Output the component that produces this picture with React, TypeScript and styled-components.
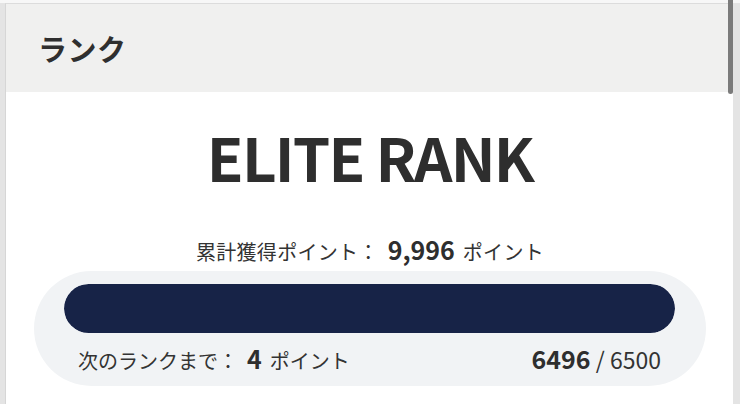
import React from "react";
import styled, { createGlobalStyle } from "styled-components";

const Global = createGlobalStyle`
  html, body { margin: 0; padding: 0; background: #e6e6e6; }
  body { font-family: "Noto Sans CJK JP", "Noto Sans", sans-serif; color: #333; overflow: hidden; }
`;

const Page = styled.div`
  position: relative;
  width: 740px;
  height: 404px;
  padding: 3px 7px 0 5px;
  box-sizing: border-box;
  background: linear-gradient(#f7f7f7, #f7f7f7) top / 100% 3px no-repeat, #e4e4e4;
`;

const Card = styled.section`
  background: #fff;
  border-top: 1px solid #dcdcdc;
  border-left: 1px solid #d6d6d6;
  height: 100%;
  box-sizing: border-box;
  display: flex;
  flex-direction: column;
`;

const Header = styled.header`
  flex: none;
  height: 88px;
  background: #f0f0ef;
  display: flex;
  align-items: center;
  padding-left: 32px;
  box-sizing: border-box;
  font-size: 29px;
  font-weight: 700;
  letter-spacing: 0.5px;
  color: #2f2f2f;
`;

const Body = styled.div`
  display: flex;
  flex-direction: column;
  align-items: center;
  padding: 0 27px 0 28px;
`;

const Title = styled.h1`
  margin: 29px 0 0;
  font-size: 60px;
  line-height: 70px;
  font-weight: 700;
  color: #2e2e2e;
  letter-spacing: -1.8px;
`;

const Total = styled.div`
  margin-top: 43px;
  height: 33px;
  font-size: 20px;
  line-height: 30px;
  letter-spacing: 0.3px;
  color: #333;
  white-space: nowrap;
`;

const Big = styled.strong<{ $size: number }>`
  font-size: ${(p) => p.$size}px;
  font-weight: 700;
  margin: 0 8px 0 9px;
  letter-spacing: 0;
  color: #2e2e2e;
`;

const Pill = styled.div`
  margin-top: 4px;
  align-self: stretch;
  height: 115px;
  box-sizing: border-box;
  border-radius: 58px;
  background: #f1f3f5;
  padding: 13px 31px 0 30px;
  display: flex;
  flex-direction: column;
`;

const Track = styled.div`
  height: 49px;
  border-radius: 25px;
  background: #e2e5ea;
  overflow: hidden;
`;

const Fill = styled.div`
  height: 100%;
  background: #172347;
  border-radius: 25px;
`;

const Row = styled.div`
  margin-top: 10px;
  display: flex;
  justify-content: space-between;
  align-items: baseline;
  padding: 0 14px 0 14px;
  font-size: 20px;
  line-height: 30px;
  color: #333;
  white-space: nowrap;
`;

const Left = styled.span``;

const Right = styled.span`
  font-size: 23px;
  color: #333;
`;

const RightBold = styled.strong`
  font-weight: 700;
  font-size: 25px;
  color: #2e2e2e;
`;

const Thumb = styled.div`
  position: absolute;
  right: 7px;
  top: 0;
  width: 5px;
  height: 94px;
  border-radius: 0 0 3px 3px;
  background: #7b7b7b;
`;

export default function App() {
  const current = 6496;
  const goal = 6500;
  return (
    <>
      <Global />
      <Page>
        <Card>
          <Header>ランク</Header>
          <Body>
            <Title>ELITE RANK</Title>
            <Total>
              累計獲得ポイント：<Big $size={25}>9,996</Big>ポイント
            </Total>
            <Pill>
              <Track>
                <Fill style={{ width: `${(current / goal) * 100}%` }} />
              </Track>
              <Row>
                <Left>
                  次のランクまで：<Big $size={25}>4</Big>ポイント
                </Left>
                <Right>
                  <RightBold>{current}</RightBold> / {goal}
                </Right>
              </Row>
            </Pill>
          </Body>
        </Card>
        <Thumb />
      </Page>
    </>
  );
}
